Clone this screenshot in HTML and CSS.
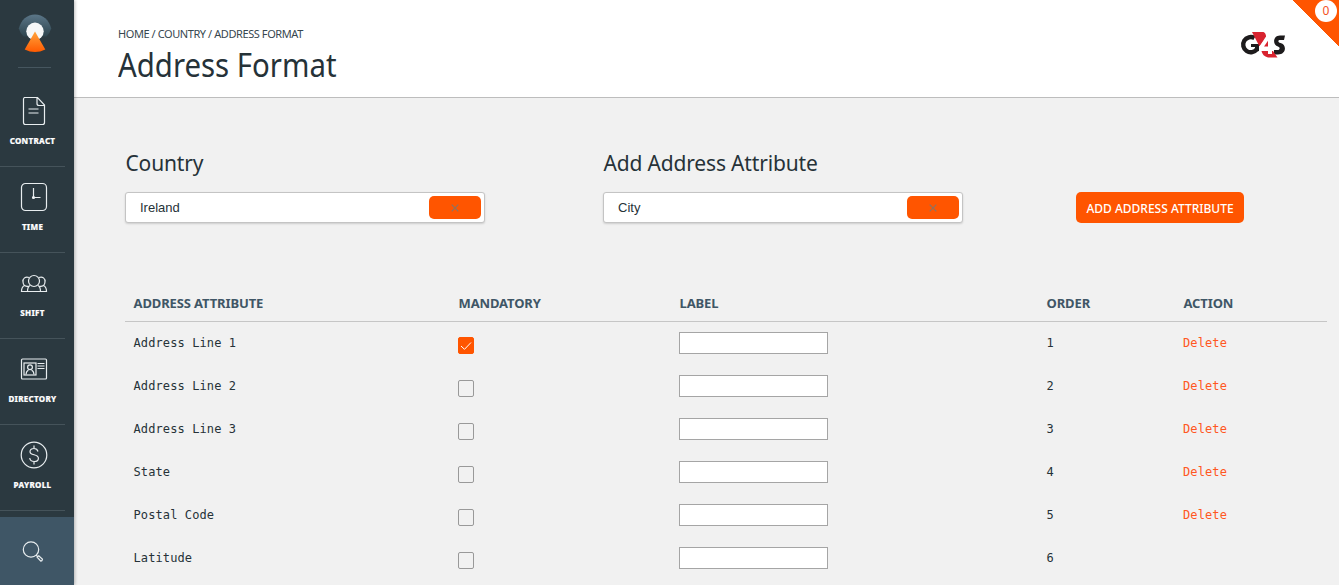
FILE: index.html
```html
<!DOCTYPE html>
<html lang="en">
<head>
<meta charset="utf-8">
<title>Address Format</title>
<link rel="stylesheet" href="styles.css">
</head>
<body>
<div class="app">
  <nav class="sidebar">
    <div class="brand">
      <svg width="34" height="40" viewBox="0 0 34 40">
        <defs>
          <linearGradient id="dome" x1="0" y1="0" x2="0" y2="1"><stop offset="0" stop-color="#5b7688"/><stop offset="1" stop-color="#2d444e"/></linearGradient>
          <linearGradient id="cone" x1="0" y1="0" x2="0" y2="1"><stop offset="0" stop-color="#ffa43d"/><stop offset="1" stop-color="#ff5a00"/></linearGradient>
        </defs>
        <path d="M5.500 23.500Q2 20 .8 15.500C3 7 9 1.500 17 1.500S31 7 33.200 15.500Q32 20 28.500 23.500Z" fill="url(#dome)"/>
        <circle cx="17" cy="18.300" r="8.700" fill="#f5f7f8"/>
        <path d="M17 18.500 27.300 36.500Q17 41.500 6.700 36.500Z" fill="url(#cone)"/>
      </svg>
    </div>
    <a class="item">
      <svg class="icon" viewBox="0 0 28 30"><path d="M4 1.500H17.500L24.500 9V26.500Q24.500 28.500 22.500 28.500H5.500Q3.500 28.500 3.500 26.500V3Q3.500 1.500 5 1.500M17 2V7.500Q17 9.500 19 9.500H24M8.500 13H18.500M8.500 17H18.500"/></svg>
      <span>CONTRACT</span>
    </a>
    <a class="item">
      <svg class="icon" viewBox="0 0 28 30"><rect x="1.500" y="1.500" width="25" height="27" rx="4"/><path d="M13.500 6V15.500H20.500"/><circle cx="13.500" cy="15.500" r="1" fill="#fff"/></svg>
      <span>TIME</span>
    </a>
    <a class="item">
      <svg class="icon" viewBox="0 0 28 30"><circle cx="14" cy="13" r="5.500"/><path d="M10 17.500C8 18.500 7.500 21 7.500 23.500H20.500C20.500 21 20 18.500 18 17.500M9 9.500C5.500 8 2.500 10.500 3 14Q3.200 16.500 4.500 17.500C2.500 18.500 1.500 20.500 1.500 23.500H7M19 9.500C22.500 8 25.500 10.500 25 14Q24.800 16.500 23.500 17.500C25.500 18.500 26.500 20.500 26.500 23.500H21M4.500 17.500Q7 19 8.500 18M23.500 17.500Q21 19 19.500 18"/></svg>
      <span>SHIFT</span>
    </a>
    <a class="item">
      <svg class="icon" viewBox="0 0 28 30"><rect x="1.500" y="5" width="25" height="20" rx="1"/><rect x="4" y="9" width="12" height="12"/><circle cx="10" cy="13.300" r="2.400"/><path d="M6 20.500Q6.300 17 8.500 16.300M11.500 16.300Q13.700 17 14 20.500M17.500 9.500H24.500M17.500 12H24.500M17.500 14.500H24.500"/></svg>
      <span>DIRECTORY</span>
    </a>
    <a class="item">
      <svg class="icon" viewBox="0 0 28 30"><circle cx="14" cy="15" r="12.800"/><path d="M18 11.500C17.500 9.500 16 8.500 14 8.500 11.500 8.500 10 9.700 10 11.700 10 16 18.400 13.500 18.400 18.200 18.400 20.300 16.700 21.500 14.200 21.500 11.700 21.500 10 20.200 9.700 18M14 5.500V8.500M14 21.500V24.500"/></svg>
      <span>PAYROLL</span>
    </a>
    <a class="search">
      <svg class="icon" viewBox="0 0 28 30"><circle cx="12" cy="12.500" r="7.700"/><path d="M17.200 18.200 18.500 19.500M18.200 20.200 19.800 18.800 23.500 22.200Q23.200 24.200 21.800 24.200Z"/></svg>
    </a>
  </nav>
  <div class="page">
    <header class="header">
      <div>
        <div class="crumbs">HOME / COUNTRY / ADDRESS FORMAT</div>
        <h1 class="title">Address Format</h1>
      </div>
      <svg class="logo" width="46" height="30" viewBox="0 0 46 30" role="img" aria-label="G4S">
        <path d="M14.500 7A7.600 7.600 0 1 0 17 18" fill="none" stroke="#1d1b1c" stroke-width="4.400"/>
        <path d="M11 13H19V20L15 21V16H11Z" fill="#1d1b1c"/>
        <path d="M45 4.500H40C32.500 4.500 32.500 14.500 38 15.500 40.500 16.500 40 19 37.500 19H34V23.500H38C46.500 23.500 47 13.500 40.500 12 37.500 11 38 9 40 9H44Z" fill="#1d1b1c"/>
        <path d="M12 1H23.500Q26 2 26 5.500L19.500 15.500Z" fill="#d8232f"/>
        <path d="M21.500 20H33L37.500 26.500H28Q22.500 25 21.500 20Z" fill="#d8232f"/>
        <path d="M27.500 5H32V15.500H34V19H32V23H28V19H19V16Z" fill="#fff"/>
        <path d="M24 15.500 28 9.800V15.500Z" fill="#d8232f"/>
      </svg>
      <div class="corner"><span class="count">0</span></div>
    </header>
    <main class="main">
      <section class="filters">
        <div class="field">
          <h2>Country</h2>
          <div class="select"><span>Ireland</span><button class="clear"><svg width="8" height="8" viewBox="0 0 8 8"><path d="M.7.7 7.300 7.300M7.300.7.7 7.300"/></svg></button></div>
        </div>
        <div class="field">
          <h2>Add Address Attribute</h2>
          <div class="select"><span>City</span><button class="clear"><svg width="8" height="8" viewBox="0 0 8 8"><path d="M.7.7 7.300 7.300M7.300.7.7 7.300"/></svg></button></div>
        </div>
        <button class="add">ADD ADDRESS ATTRIBUTE</button>
      </section>
      <section class="table">
        <div class="row head"><span>ADDRESS ATTRIBUTE</span><span>MANDATORY</span><span>LABEL</span><span>ORDER</span><span>ACTION</span></div>
        <div class="row"><span>Address Line 1</span><i class="check on"><svg width="12" height="10" viewBox="0 0 12 10"><path d="M1 5 4.500 8.300 11 1.500"/></svg></i><input class="label"><span>1</span><a class="delete">Delete</a></div>
        <div class="row"><span>Address Line 2</span><i class="check"></i><input class="label"><span>2</span><a class="delete">Delete</a></div>
        <div class="row"><span>Address Line 3</span><i class="check"></i><input class="label"><span>3</span><a class="delete">Delete</a></div>
        <div class="row"><span>State</span><i class="check"></i><input class="label"><span>4</span><a class="delete">Delete</a></div>
        <div class="row"><span>Postal Code</span><i class="check"></i><input class="label"><span>5</span><a class="delete">Delete</a></div>
        <div class="row"><span>Latitude</span><i class="check"></i><input class="label"><span>6</span></div>
      </section>
    </main>
  </div>
</div>
</body>
</html>
```
FILE: styles.css
```css
* { box-sizing: border-box; }
body { margin: 0; font-family: "Noto Sans", sans-serif; color: #263238; background: #f1f1f1; }
.app { display: flex; height: 585px; overflow: hidden; }
.sidebar { width: 74px; flex: none; background: #2b3940; display: flex; flex-direction: column; box-shadow: 1px 0 3px rgba(0,0,0,.25); z-index: 1; }
.brand { height: 68px; width: 33px; margin: 0 0 13px 18px; padding-top: 13px; border-bottom: 1px solid #46565f; flex: none; }
.brand svg { display: block; }
.item { width: 65px; height: 86px; flex: none; padding-top: 15px; border-bottom: 1px solid #45535a; display: flex; flex-direction: column; align-items: center; color: #fff; font-size: 8px; line-height: 12px; font-weight: 800; letter-spacing: .3px; }
.icon { width: 28px; height: 30px; display: block; fill: none; stroke: #e8edef; stroke-width: 1.2; }
.item .icon { margin-left: 3px; }
.item span { margin-top: 9px; -webkit-text-stroke: .2px #fff; }
.search { margin-top: 6px; flex: 1; background: #3f5666; padding: 20px 0 0 19px; }
.page { flex: 1; min-width: 0; }
.header { position: relative; height: 98px; background: #fff; border-bottom: 1px solid #bdbdbd; padding: 27px 53px 0 44px; display: flex; justify-content: space-between; }
.crumbs { font-size: 11px; line-height: 14px; letter-spacing: -.42px; color: #37474f; }
.title { margin: 4px 0 0; font-size: 32px; line-height: 40px; font-weight: 400; transform: scaleX(.918); transform-origin: left; }
.logo { margin-top: 4px; }
.corner { position: absolute; right: 0; top: 0; width: 47px; height: 47px; background: linear-gradient(45deg, transparent 50%, #ff5500 50%); }
.count { position: absolute; left: 23px; top: 0; width: 22px; height: 22px; border-radius: 50%; background: #fff; color: #f4511e; font-size: 12px; line-height: 22px; text-align: center; }
.main { padding: 50px 12px 0 51px; }
.filters { display: grid; grid-template-columns: 478px 473px 168px; align-items: end; }
.field h2 { margin: 0 0 14px; font-size: 21px; line-height: 30px; font-weight: 400; letter-spacing: -.17px; padding-left: .5px; }
.select { width: 360px; height: 31px; display: flex; align-items: center; justify-content: space-between; padding: 0 3px 0 14px; background: #fff; border: 1px solid #c4c4c4; border-radius: 3px; box-shadow: 0 1px 2px rgba(0,0,0,.15); font: 13px "Liberation Sans", sans-serif; }
.clear { width: 52px; height: 23px; border: 0; border-radius: 5px; background: #ff5500; padding: 0; display: flex; align-items: center; justify-content: center; }
.clear svg { fill: none; stroke: #8c7362; stroke-width: 1.2; }
.add { height: 31px; border: 0; border-radius: 5px; padding: 2px 0 0; background: #ff5500; color: #fff; font: 500 12px "Noto Sans", sans-serif; white-space: nowrap; }
.table { margin-top: 63px; }
.row { height: 43px; display: grid; grid-template-columns: 325px 221px 367px 137px 1fr; padding: 10px 0 0 8px; align-items: start; font: 12px/22px "DejaVu Sans Mono", monospace; letter-spacing: .11px; }
.row span { padding-left: .5px; }
.head { height: 36px; padding-top: 6px; border-bottom: 1px solid #c6c6c6; font: bold 13px/22px "Noto Sans", sans-serif; letter-spacing: -.12px; color: #3f5666; }
.check { width: 16px; height: 17px; margin-top: 5px; border: 1px solid #999; border-radius: 2px; display: flex; align-items: center; justify-content: center; }
.on { background: #ff5500; border-color: #ff5500; }
.on svg { fill: none; stroke: #fff; flex: none; }
.label { width: 149px; height: 22px; border: 1px solid #a5a5a5; background: #fff; padding: 0; }
.delete { color: #ff5722; }
```
